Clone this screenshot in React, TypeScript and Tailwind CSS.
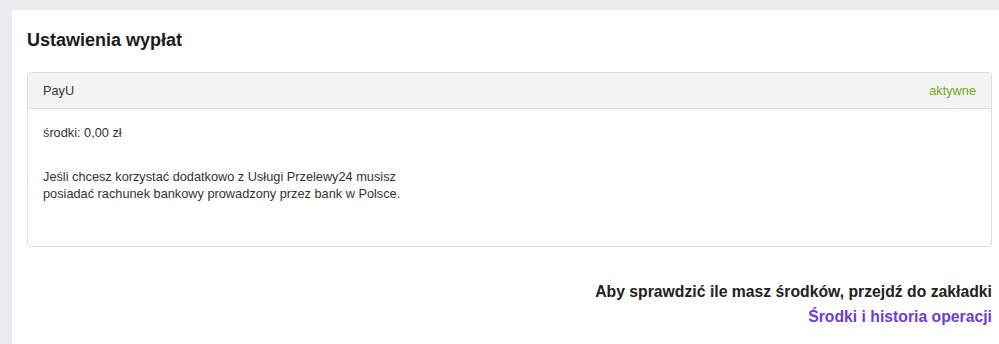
import React from 'react';

export default function App() {
  return (
    <div className="h-[344px] overflow-hidden bg-[#eaedf0] pt-[10px] pl-[12px]" style={{ fontFamily: '"Liberation Sans", Arial, sans-serif' }}>
      <div className="h-full bg-white pl-[15px] pr-[7px] pt-5">
        <h1 className="text-[18px] leading-[20px] font-bold text-[#1a1a1a]">Ustawienia wypłat</h1>

        <div className="mt-[22px] border border-[#dddddd] rounded-[4px]">
          <div className="h-[36px] flex items-center justify-between px-[15px] bg-[#f4f4f4] border-b border-[#dddddd] rounded-t-[4px] text-[12.75px]">
            <span className="text-[#333]">PayU</span>
            <span className="text-[#72a31f]">aktywne</span>
          </div>
          <div className="px-[15px] pt-[15px] pb-[44px] text-[12.75px] leading-[17px] text-[#333]">
            <div>środki: 0,00 zł</div>
            <p className="mt-[27px]">
              Jeśli chcesz korzystać dodatkowo z Usługi Przelewy24 musisz
              <br />
              posiadać rachunek bankowy prowadzony przez bank w Polsce.
            </p>
          </div>
        </div>

        <div className="mt-[32px] text-right text-[15.75px] leading-[25px] font-bold">
          <div className="text-[#222]">Aby sprawdzić ile masz środków, przejdź do zakładki</div>
          <a href="#" className="text-[#6a3fd1]">Środki i historia operacji</a>
        </div>
      </div>
    </div>
  );
}
